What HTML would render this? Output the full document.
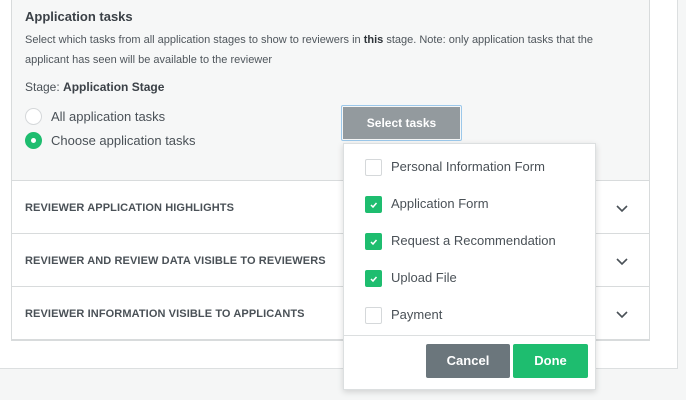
<!DOCTYPE html>
<html><head><style>
*{box-sizing:border-box;margin:0;padding:0}
body{width:686px;height:400px;background:#f5f6f6;font-family:"Liberation Sans",sans-serif;color:#3b4147;position:relative;overflow:hidden}
.abs{position:absolute}
.outer{left:-1px;top:-1px;width:679px;height:370px;background:#fff;border:1px solid #dcdfe0}
.inner{left:11px;top:-1px;width:639px;height:342px;border:1px solid #d8dbdc;background:#fff}
.top{left:12px;top:0;width:637px;height:181px;background:#f6f7f7;border-bottom:1px solid #d8dbdc}
.row{left:12px;width:637px;height:53px;border-bottom:1px solid #d8dbdc;font-size:11px;font-weight:bold;color:#4a5157;padding:21px 0 0 13px;letter-spacing:0.1px}
.chev{position:absolute;left:604px;top:24px}
.radio{width:17px;height:17px;border-radius:50%;border:1px solid #d5d8da;background:#fff}
.cb{position:absolute;left:21px;width:17px;height:17px;border-radius:2px;border:1px solid #d5d8da;background:#fff}
.cb.on{background:#1ebd6f;border-color:#1ebd6f}
.item{position:absolute;left:47px;font-size:13px;color:#4a5157}
</style></head><body>
<div class="abs outer"></div>
<div class="abs inner"></div>
<div class="abs top"></div>
<div class="abs" style="left:25px;top:9px;font-size:13px;font-weight:bold;color:#3b4147">Application tasks</div>
<div class="abs" style="left:25px;top:30px;font-size:11px;line-height:20px;color:#4f565c;width:640px">Select which tasks from all application stages to show to reviewers in <b style="color:#2d3338">this</b> stage. Note: only application tasks that the<br>applicant has seen will be available to the reviewer</div>
<div class="abs" style="left:25px;top:80px;font-size:12px;color:#4a5157">Stage: <b style="color:#3b4147">Application Stage</b></div>
<div class="abs radio" style="left:25px;top:108px"></div>
<div class="abs" style="left:51px;top:109px;font-size:13px;color:#4a5157">All application tasks</div>
<div class="abs radio" style="left:25px;top:132px;background:#1ebd6f;border-color:#1ebd6f"><div style="width:5px;height:5px;background:#fff;border-radius:50%;margin:5px 0 0 5px"></div></div>
<div class="abs" style="left:51px;top:133px;font-size:13px;color:#4a5157">Choose application tasks</div>
<div class="abs" style="left:341px;top:105px;width:121px;height:36px;border:1px solid #9cc8ea;border-radius:2px;padding:1px">
<div style="background:#939a9e;height:100%;color:#fff;font-size:12px;font-weight:bold;text-align:center;line-height:32px">Select tasks</div></div>
<div class="abs row" style="top:181px">REVIEWER APPLICATION HIGHLIGHTS<svg class="chev" width="12" height="8"><path d="M1 1l5 5 5-5" stroke="#4a5157" stroke-width="1.6" fill="none"/></svg></div>
<div class="abs row" style="top:234px">REVIEWER AND REVIEW DATA VISIBLE TO REVIEWERS<svg class="chev" width="12" height="8"><path d="M1 1l5 5 5-5" stroke="#4a5157" stroke-width="1.6" fill="none"/></svg></div>
<div class="abs row" style="top:287px">REVIEWER INFORMATION VISIBLE TO APPLICANTS<svg class="chev" width="12" height="8"><path d="M1 1l5 5 5-5" stroke="#4a5157" stroke-width="1.6" fill="none"/></svg></div>
<div class="abs" style="left:343px;top:143px;width:253px;height:247px;background:#fff;border:1px solid #dcdfe0;box-shadow:0 2px 6px rgba(0,0,0,0.15)">
<div class="cb" style="top:15px"></div><div class="item" style="top:15px">Personal Information Form</div>
<div class="cb on" style="top:52px"><svg width="15" height="15"><path d="M5 8l2 2 3.5-4" stroke="#fff" stroke-width="1.5" fill="none"/></svg></div><div class="item" style="top:52px">Application Form</div>
<div class="cb on" style="top:89px"><svg width="15" height="15"><path d="M5 8l2 2 3.5-4" stroke="#fff" stroke-width="1.5" fill="none"/></svg></div><div class="item" style="top:89px">Request a Recommendation</div>
<div class="cb on" style="top:126px"><svg width="15" height="15"><path d="M5 8l2 2 3.5-4" stroke="#fff" stroke-width="1.5" fill="none"/></svg></div><div class="item" style="top:126px">Upload File</div>
<div class="cb" style="top:163px"></div><div class="item" style="top:163px">Payment</div>
<div style="position:absolute;left:0;top:191px;width:251px;border-top:1px solid #dcdfe0"></div>
<div style="position:absolute;left:82px;top:200px;width:84px;height:34px;background:#6b767c;border-radius:2px;color:#fff;font-size:13px;font-weight:bold;text-align:center;line-height:34px">Cancel</div>
<div style="position:absolute;left:169px;top:200px;width:75px;height:34px;background:#1ebd6f;border-radius:2px;color:#fff;font-size:13px;font-weight:bold;text-align:center;line-height:34px">Done</div>
</div>
</body></html>
